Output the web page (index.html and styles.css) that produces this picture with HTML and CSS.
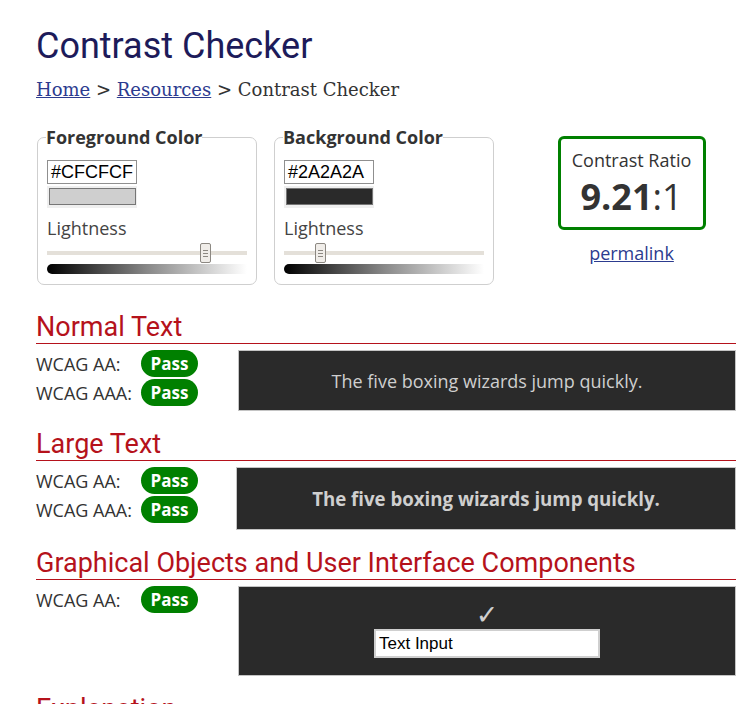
FILE: index.html
```html
<!DOCTYPE html>
<html>
<head>
<meta charset="utf-8">
<title>Contrast Checker</title>
<link rel="stylesheet" href="styles.css">
</head>
<body>
<main class="page">
  <h1 class="title">Contrast Checker</h1>
  <nav class="crumbs"><a href="#">Home</a> &gt; <a href="#">Resources</a> &gt; Contrast Checker</nav>

  <div class="pickers">
    <fieldset class="picker">
      <legend>Foreground Color</legend>
      <div class="hex">#CFCFCF</div>
      <div class="swatch"><span class="swatch-in fg"></span></div>
      <div class="label">Lightness</div>
      <div class="slider">
        <div class="track"></div>
        <div class="thumb" style="left:153px"><span></span><span></span><span></span></div>
      </div>
      <div class="grad"></div>
    </fieldset>
    <fieldset class="picker">
      <legend>Background Color</legend>
      <div class="hex">#2A2A2A</div>
      <div class="swatch"><span class="swatch-in bg"></span></div>
      <div class="label">Lightness</div>
      <div class="slider">
        <div class="track"></div>
        <div class="thumb" style="left:31px"><span></span><span></span><span></span></div>
      </div>
      <div class="grad"></div>
    </fieldset>
    <div class="ratio-col">
      <div class="ratio">
        <div class="ratio-label">Contrast Ratio</div>
        <div class="ratio-val"><b>9.21</b>:1</div>
      </div>
      <a class="permalink" href="#">permalink</a>
    </div>
  </div>

  <h2 class="sec">Normal Text</h2>
  <div class="result">
    <div class="checks">
      <div class="row"><span class="lab">WCAG AA:</span><span class="pass">Pass</span></div>
      <div class="row"><span class="lab">WCAG AAA:</span><span class="pass">Pass</span></div>
    </div>
    <div class="sample normal">The five boxing wizards jump quickly.</div>
  </div>

  <h2 class="sec">Large Text</h2>
  <div class="result">
    <div class="checks narrow">
      <div class="row"><span class="lab">WCAG AA:</span><span class="pass">Pass</span></div>
      <div class="row"><span class="lab">WCAG AAA:</span><span class="pass">Pass</span></div>
    </div>
    <div class="sample large">The five boxing wizards jump quickly.</div>
  </div>

  <h2 class="sec">Graphical Objects and User Interface Components</h2>
  <div class="result">
    <div class="checks">
      <div class="row"><span class="lab">WCAG AA:</span><span class="pass">Pass</span></div>
    </div>
    <div class="sample ui">
      <span class="check">&#10003;</span>
      <div class="textinput">Text Input</div>
    </div>
  </div>

  <h2 class="sec">Explanation</h2>
</main>
</body>
</html>
```
FILE: styles.css
```css
html, body {
  margin: 0;
  padding: 0;
  background: #fff;
}
body {
  font-family: "Open Sans", sans-serif;
  color: #333;
  font-size: 18px;
}
.page {
  margin-left: 36px;
  width: 700px;
  padding-top: 24px;
}
.title {
  font-family: Roboto, sans-serif;
  font-weight: 400;
  font-size: 36px;
  line-height: 44px;
  color: #1d1b5a;
  margin: 0;
}
.crumbs {
  font-family: "DejaVu Serif", serif;
  font-size: 18px;
  line-height: 24px;
  color: #333;
  margin-top: 10px;
}
.crumbs a {
  color: #2c3b8f;
}
.pickers {
  display: flex;
  align-items: flex-start;
  margin-top: 24px;
}
.picker {
  width: 220px;
  box-sizing: border-box;
  margin: 0 16px 0 1px;
  padding: 0 9px 10px;
  border: 1px solid #cfcfcf;
  border-radius: 7px;
}
.picker legend {
  font-weight: 700;
  font-size: 18px;
  line-height: 22px;
  color: #333;
  padding: 0;
  margin-left: -1px;
}
.hex {
  width: 90px;
  height: 24px;
  box-sizing: border-box;
  border: 1px solid #8f8f8f;
  font-family: "Liberation Sans", Arial, sans-serif;
  font-size: 18px;
  line-height: 22px;
  color: #000;
  padding-left: 3px;
  margin-top: 12px;
}
.swatch {
  width: 90px;
  height: 22px;
  box-sizing: border-box;
  background: #efefef;
  padding: 2px;
  margin-top: 2px;
}
.swatch-in {
  display: block;
  height: 17px;
  border: 1px solid #767676;
  box-sizing: border-box;
  width: 87px;
}
.swatch-in.fg { background: #cfcfcf; }
.swatch-in.bg { background: #2a2a2a; }
.label {
  font-size: 18px;
  line-height: 24px;
  color: #444;
  margin-top: 8px;
}
.slider {
  position: relative;
  height: 20px;
  margin-top: 3px;
}
.track {
  position: absolute;
  left: 0;
  right: 0;
  top: 8px;
  height: 4px;
  background: #e4e0d9;
}
.thumb {
  position: absolute;
  top: 0;
  width: 11px;
  height: 20px;
  box-sizing: border-box;
  background: #f0ede9;
  border: 1px solid #8c8882;
  border-radius: 2px;
  display: flex;
  flex-direction: column;
  align-items: center;
  justify-content: center;
  gap: 2px;
}
.thumb span {
  display: block;
  width: 5px;
  height: 1px;
  background: #8c8882;
}
.grad {
  height: 10px;
  margin-top: 1px;
  border-radius: 5px 0 0 5px;
  background: linear-gradient(to right, #000, #888 50%, #fff);
}
.ratio-col {
  flex: 1;
  display: flex;
  flex-direction: column;
  align-items: center;
  margin-left: 17px;
}
.ratio {
  width: 148px;
  height: 94px;
  box-sizing: border-box;
  border: 3px solid #008000;
  border-radius: 6px;
  text-align: center;
  padding-top: 10px;
  margin-top: 10px;
}
.ratio-label {
  font-size: 18px;
  line-height: 22px;
  color: #333;
}
.ratio-val {
  font-size: 36px;
  line-height: 40px;
  margin-top: 6px;
  color: #333;
}
.ratio-val b { font-weight: 700; }
.permalink {
  font-size: 18px;
  line-height: 24px;
  color: #2c3b8f;
  margin-top: 11px;
}
.sec {
  font-family: Roboto, sans-serif;
  font-weight: 400;
  font-size: 27px;
  line-height: 30px;
  color: #b5121b;
  margin: 0;
  border-bottom: 1px solid #b5121b;
  padding-bottom: 1px;
}
.pickers + .sec { margin-top: 27px; }
.result + .sec { margin-top: 18px; }
.result {
  display: flex;
  margin-top: 6px;
}
.checks {
  width: 202px;
  flex: none;
}
.checks.narrow { width: 200px; }
.row {
  display: flex;
  align-items: center;
  height: 27px;
  margin-bottom: 2px;
}
.lab {
  width: 105px;
  font-size: 18px;
  color: #333;
}
.pass {
  display: inline-block;
  width: 57px;
  height: 27px;
  border-radius: 14px;
  background: #008000;
  color: #fff;
  font-weight: 700;
  font-size: 17px;
  line-height: 27px;
  text-align: center;
}
.sample {
  flex: 1;
  background: #2a2a2a;
  color: #cfcfcf;
  border: 1px solid #c4c4c4;
  display: flex;
  align-items: center;
  justify-content: center;
}
.sample.normal { height: 61px; box-sizing: border-box; font-size: 18px; }
.sample.large { height: 63px; box-sizing: border-box; font-size: 18.66px; font-weight: 700; }
.sample.ui {
  height: 90px;
  box-sizing: border-box;
  flex-direction: column;
  justify-content: flex-start;
  padding-top: 14px;
}
.check {
  font-family: "DejaVu Sans", sans-serif;
  font-size: 27px;
  line-height: 27px;
  color: #cfcfcf;
}
.textinput {
  width: 226px;
  height: 29px;
  box-sizing: border-box;
  border: 2px solid #cfcfcf;
  background: #fff;
  color: #000;
  font-family: "Liberation Sans", Arial, sans-serif;
  font-size: 17px;
  line-height: 25px;
  padding-left: 3px;
  margin-top: 1px;
}
```
